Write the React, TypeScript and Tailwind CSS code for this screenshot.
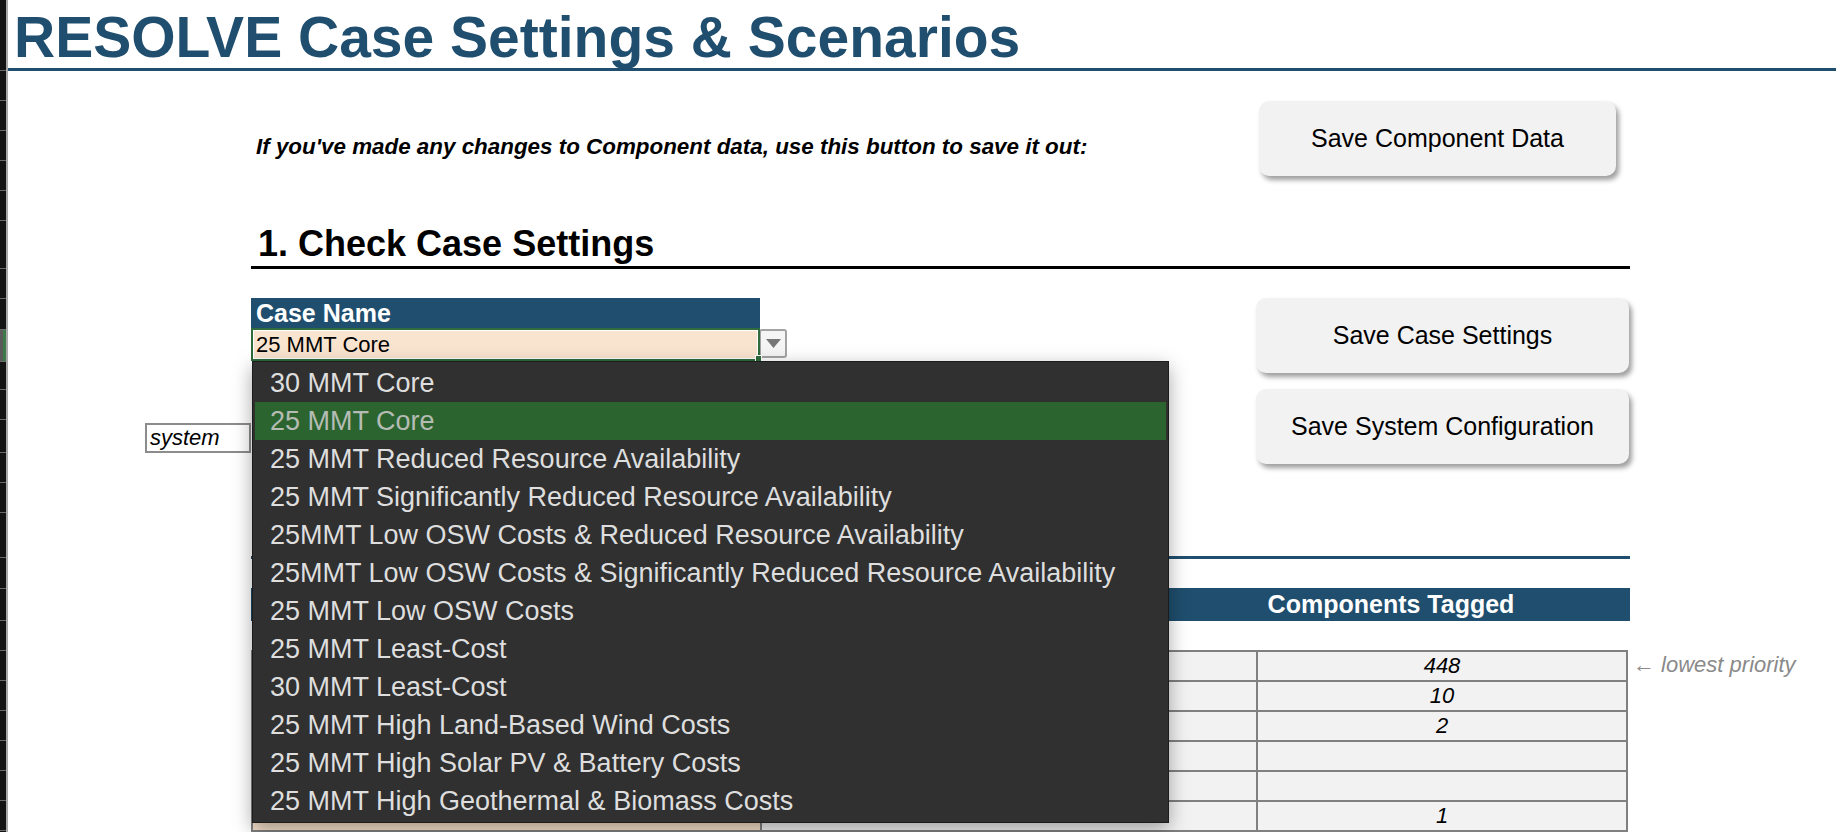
import React from 'react';

const rowHeads = [
    'h-[71px]', 'h-[30px]', 'h-[30px]', 'h-[30px]', 'h-[30px]', 'h-[30px]', 'h-[48px]', 'h-[30px]', 'h-[31px]',
    'sel', 'h-[28px]', 'h-[30px]', 'h-[33px]', 'h-[30px]', 'h-[30px]', 'h-[45px]', 'h-[31px]', 'h-[32px]',
    'h-[30px]', 'h-[30px]', 'h-[30px]', 'h-[30px]', 'h-[30px]', 'h-[30px]', 'h-[30px]',
];

const cases = [
    '30 MMT Core',
    '25 MMT Core',
    '25 MMT Reduced Resource Availability',
    '25 MMT Significantly Reduced Resource Availability',
    '25MMT Low OSW Costs & Reduced Resource Availability',
    '25MMT Low OSW Costs & Significantly Reduced Resource Availability',
    '25 MMT Low OSW Costs',
    '25 MMT Least-Cost',
    '30 MMT Least-Cost',
    '25 MMT High Land-Based Wind Costs',
    '25 MMT High Solar PV & Battery Costs',
    '25 MMT High Geothermal & Biomass Costs',
];

const tagged = ['448', '10', '2', '', '', '1'];

function SheetButton({ label, className }: { label: string; className: string }) {
    return (
        <div className={`flex items-center justify-center rounded-[10px] bg-[#f2f2f2] text-[25px] text-black shadow-[3px_4px_5px_rgba(0,0,0,0.38)] ${className}`}>
            {label}
        </div>
    );
}

export default function App() {
    return (
        <div className="flex h-[832px] w-[1836px] overflow-hidden bg-white font-['Liberation_Sans',Arial,sans-serif]">
            {/* Excel row headers */}
            <div className="w-[8px] shrink-0 border-r-2 border-[#a8a8a8] bg-[#141414]">
                {rowHeads.map((h, i) =>
                    h === 'sel' ? (
                        <div key={i} className="flex h-[32px] border-b border-[#6b6b6b]">
                            <div className="w-[3px] bg-[#5a5a5a]" />
                            <div className="flex-1 bg-[#3d7a4a]" />
                        </div>
                    ) : (
                        <div key={i} className={`${h} border-b border-[#6b6b6b]`} />
                    )
                )}
            </div>

            <div className="flex-1">
                {/* Title */}
                <div className="h-[71px] border-b-[3px] border-[#1f4e6e] pl-[6px] pt-[9px]">
                    <h1 className="text-[57px] font-bold leading-[56px] text-[#1f4e6e]">RESOLVE Case Settings &amp; Scenarios</h1>
                </div>

                <div className="ml-[243px] w-[1379px]">
                    {/* Save component data */}
                    <div className="mt-[30px] flex h-[75px]">
                        <div className="w-[1008px] pl-[5px] pt-[34px] text-[22.4px] font-bold italic leading-[24px] text-black">
                            If you've made any changes to Component data, use this button to save it out:
                        </div>
                        <SheetButton label="Save Component Data" className="h-[75px] w-[357px]" />
                    </div>

                    {/* Section 1 */}
                    <div className="mt-[50px] border-b-[3px] border-black pb-[4px] pl-[7px] text-[36px] font-bold leading-[36px] text-black">
                        1. Check Case Settings
                    </div>

                    <div className="mt-[29px] flex items-start">
                        <div className="w-[1005px]">
                            <div className="h-[30px] w-[509px] bg-[#1f4e6e] pl-[5px] text-[25px] font-bold leading-[30px] text-white">Case Name</div>
                            <div className="relative flex h-[33px]">
                                <div className="relative h-[33px] w-[509px] border-2 border-[#2f6b3c]">
                                    <div className="h-full border border-white bg-[#f9e4d0] pl-[2px] text-[22px] leading-[27px] text-black">25 MMT Core</div>
                                    <div className="absolute -bottom-[3px] -right-[4px] h-[7px] w-[7px] border border-white bg-[#2f6b3c]" />
                                </div>
                                <div className="ml-[-1px] mt-[1px] flex h-[29px] w-[28px] items-center justify-center rounded-[3px] border-2 border-[#a3a3a3] bg-[#f5f5f5]">
                                    <svg width="15" height="9" viewBox="0 0 15 9">
                                        <path d="M0 0 L15 0 L7.5 9 Z" fill="#777" />
                                    </svg>
                                </div>

                                {/* open dropdown list */}
                                <div className="absolute left-[1px] top-full z-10 w-[917px] border border-[#1c1c1c] bg-[#303030] p-[2px] shadow-[0_6px_18px_rgba(0,0,0,0.35)]">
                                    {cases.map((c, i) => (
                                        <div
                                            key={c}
                                            className={`h-[38px] whitespace-nowrap pl-[15px] text-[27px] leading-[38px] ${
                                                i === 1 ? 'bg-[#2c6430] text-[#b4bcb4]' : 'text-[#dedede]'
                                            }`}
                                        >
                                            {c}
                                        </div>
                                    ))}
                                </div>
                            </div>
                            <div className="-ml-[106px] mt-[62px] h-[30px] w-[106px] border-2 border-[#8c8c8c] pl-[3px] text-[22px] italic leading-[26px] text-black">
                                system
                            </div>
                        </div>
                        <div className="w-[373px]">
                            <SheetButton label="Save Case Settings" className="h-[75px] w-full" />
                            <SheetButton label="Save System Configuration" className="mt-[16px] h-[75px] w-full" />
                        </div>
                    </div>

                    {/* Section 2 (behind dropdown) */}
                    <div className="mt-[92px] h-[3px] bg-[#1f4e6e]" />
                    <div className="mt-[29px] grid h-[33px] grid-cols-[901px_1fr] bg-[#1f4e6e] text-[25px] font-bold leading-[33px] text-white">
                        <div />
                        <div className="text-center">Components Tagged</div>
                    </div>

                    <div className="mt-[29px] flex">
                        <div className="w-[1377px] shrink-0 border-t-2 border-[#808080]">
                            {tagged.map((v, i) => (
                                <div key={i} className="flex h-[30px] border-b-2 border-[#808080] text-[22px] leading-[28px]">
                                    <div className={`w-[509px] border-l-2 border-[#808080] pl-[4px] ${i === 5 ? 'bg-[#f7e1cb]' : 'bg-[#f2f2f2]'}`}>
                                        {i === 5 ? 'Loads' : ''}
                                    </div>
                                    <div className="w-[496px] border-l-2 border-[#808080] bg-[#f2f2f2] pl-[4px]">
                                        {i === 5 ? '2022 IEPR - CAP Hours' : ''}
                                    </div>
                                    <div className="flex-1 border-x-2 border-[#808080] bg-[#f2f2f2] text-center italic">{v}</div>
                                </div>
                            ))}
                        </div>
                        <div className="ml-[5px] shrink-0 whitespace-nowrap text-[22px] italic leading-[30px] text-[#8a8a8a]">← lowest priority</div>
                    </div>
                </div>
            </div>
        </div>
    );
}
